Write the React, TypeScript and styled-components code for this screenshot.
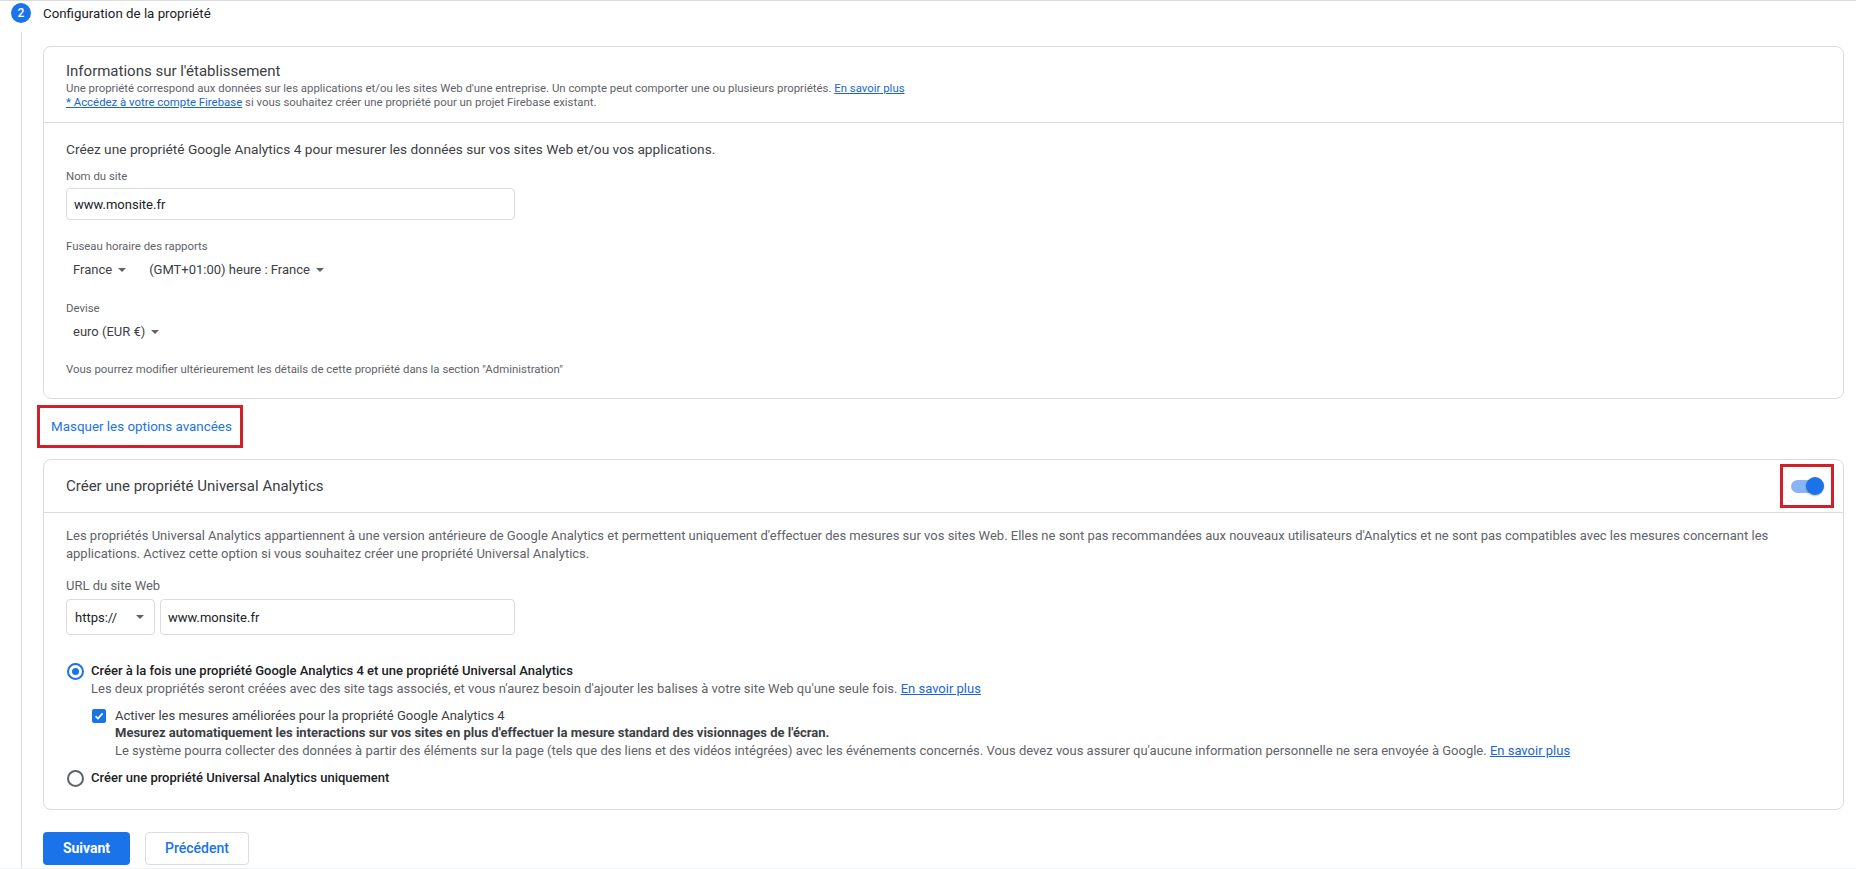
import React from "react";
import styled, { createGlobalStyle } from "styled-components";

const GlobalStyle = createGlobalStyle`
  html, body {
    margin: 0;
    padding: 0;
    background: #f1f3f4;
  }
  body {
    font-family: Roboto, "Liberation Sans", Arial, sans-serif;
    color: #202124;
  }
  * {
    box-sizing: border-box;
  }
`;

const App: React.FC = () => {
    return (
        <Page>
            <GlobalStyle />
            <StepHeader>
                <StepNumber>2</StepNumber>
                <StepTitle>Configuration de la propriété</StepTitle>
            </StepHeader>
            <StepBody>
                <Card>
                    <CardHeader>
                        <HeaderTitle>Informations sur l'établissement</HeaderTitle>
                        <SmallText>
                            Une propriété correspond aux données sur les applications et/ou les sites Web d'une
                            entreprise. Un compte peut comporter une ou plusieurs propriétés.{" "}
                            <Link href="#">En savoir plus</Link>
                        </SmallText>
                        <SmallText>
                            <Link href="#">* Accédez à votre compte Firebase</Link> si vous souhaitez créer une
                            propriété pour un projet Firebase existant.
                        </SmallText>
                    </CardHeader>
                    <CardBody>
                        <Intro>
                            Créez une propriété Google Analytics 4 pour mesurer les données sur vos sites Web et/ou
                            vos applications.
                        </Intro>
                        <FieldLabel $top={11}>Nom du site</FieldLabel>
                        <TextInput $width={449} $top={5}>www.monsite.fr</TextInput>
                        <FieldLabel $top={19}>Fuseau horaire des rapports</FieldLabel>
                        <SelectRow>
                            <InlineSelect>
                                France <Caret />
                            </InlineSelect>
                            <InlineSelect>
                                (GMT+01:00) heure : France <Caret />
                            </InlineSelect>
                        </SelectRow>
                        <FieldLabel $top={22}>Devise</FieldLabel>
                        <SelectRow>
                            <InlineSelect>
                                euro (EUR €) <Caret />
                            </InlineSelect>
                        </SelectRow>
                        <FieldLabel $top={21}>
                            Vous pourrez modifier ultérieurement les détails de cette propriété dans la section
                            "Administration"
                        </FieldLabel>
                    </CardBody>
                </Card>

                <Highlight>
                    <AdvancedLink href="#">Masquer les options avancées</AdvancedLink>
                </Highlight>

                <Card>
                    <ToggleHeader>
                        <HeaderTitle>Créer une propriété Universal Analytics</HeaderTitle>
                        <ToggleHighlight>
                            <SwitchTrack>
                                <SwitchThumb />
                            </SwitchTrack>
                        </ToggleHighlight>
                    </ToggleHeader>
                    <CardBody $top={14}>
                        <Paragraph>
                            Les propriétés Universal Analytics appartiennent à une version antérieure de Google
                            Analytics et permettent uniquement d'effectuer des mesures sur vos sites Web. Elles ne sont
                            pas recommandées aux nouveaux utilisateurs d'Analytics et ne sont pas compatibles avec les
                            mesures concernant les applications. Activez cette option si vous souhaitez créer une
                            propriété Universal Analytics.
                        </Paragraph>
                        <UrlLabel>URL du site Web</UrlLabel>
                        <UrlRow>
                            <ProtocolSelect>
                                https:// <Caret />
                            </ProtocolSelect>
                            <TextInput $width={355} $height={36}>
                                www.monsite.fr
                            </TextInput>
                        </UrlRow>

                        <OptionRow $top={27}>
                            <Radio $checked />
                            <OptionBlock>
                                <OptionLabel>
                                    Créer à la fois une propriété Google Analytics 4 et une propriété Universal
                                    Analytics
                                </OptionLabel>
                                <Paragraph>
                                    Les deux propriétés seront créées avec des site tags associés, et vous n'aurez
                                    besoin d'ajouter les balises à votre site Web qu'une seule fois.{" "}
                                    <Link href="#">En savoir plus</Link>
                                </Paragraph>
                                <CheckRow>
                                    <CheckBox>
                                        <svg width="10" height="10" viewBox="0 0 10 10">
                                            <path
                                                d="M1.5 5.2 L4 7.6 L8.6 2.4"
                                                fill="none"
                                                stroke="#fff"
                                                strokeWidth="1.6"
                                            />
                                        </svg>
                                    </CheckBox>
                                    <OptionBlock>
                                        <Paragraph $dark>
                                            Activer les mesures améliorées pour la propriété Google Analytics 4
                                        </Paragraph>
                                        <BoldLine>
                                            Mesurez automatiquement les interactions sur vos sites en plus d'effectuer
                                            la mesure standard des visionnages de l'écran.
                                        </BoldLine>
                                        <Paragraph>
                                            Le système pourra collecter des données à partir des éléments sur la page
                                            (tels que des liens et des vidéos intégrées) avec les événements concernés.
                                            Vous devez vous assurer qu'aucune information personnelle ne sera envoyée à
                                            Google. <Link href="#">En savoir plus</Link>
                                        </Paragraph>
                                    </OptionBlock>
                                </CheckRow>
                            </OptionBlock>
                        </OptionRow>
                        <OptionRow $top={9}>
                            <Radio />
                            <OptionLabel>Créer une propriété Universal Analytics uniquement</OptionLabel>
                        </OptionRow>
                    </CardBody>
                </Card>

                <Actions>
                    <PrimaryButton>Suivant</PrimaryButton>
                    <SecondaryButton>Précédent</SecondaryButton>
                </Actions>
            </StepBody>
        </Page>
    );
};

const Page = styled.div`
  background: #fff;
  border-top: 1px solid #dadce0;
`;

const StepHeader = styled.div`
  display: flex;
  align-items: center;
  padding: 2px 0 0 11px;
`;

const StepNumber = styled.div`
  width: 20px;
  height: 20px;
  border-radius: 50%;
  background: #1a73e8;
  color: #fff;
  font-size: 12px;
  font-weight: 500;
  display: flex;
  align-items: center;
  justify-content: center;
`;

const StepTitle = styled.div`
  margin-left: 12px;
  font-size: 13.3px;
  color: #202124;
`;

const StepBody = styled.div`
  margin: 9px 0 0 21px;
  border-left: 1px solid #dadce0;
  padding: 14px 12px 3px 21px;
`;

const Card = styled.div`
  border: 1px solid #dadce0;
  border-radius: 8px;
  background: #fff;
`;

const CardHeader = styled.div`
  padding: 14px 22px 13px;
  border-bottom: 1px solid #dadce0;
`;

const ToggleHeader = styled.div`
  display: flex;
  align-items: center;
  justify-content: space-between;
  height: 53px;
  padding: 0 9px 0 22px;
  border-bottom: 1px solid #dadce0;
`;

const HeaderTitle = styled.div`
  font-size: 15px;
  line-height: 20px;
  color: #3c4043;
`;

const SmallText = styled.div`
  font-size: 11.4px;
  line-height: 14px;
  color: #5f6368;
`;

const Link = styled.a`
  color: #1967d2;
  text-decoration: underline;
`;

const CardBody = styled.div<{ $top?: number }>`
  padding: ${(p) => p.$top ?? 17}px 22px 22px;
`;

const Intro = styled.div`
  font-size: 13.7px;
  line-height: 18px;
  color: #3c4043;
`;

const FieldLabel = styled.div<{ $top: number }>`
  margin-top: ${(p) => p.$top}px;
  font-size: 11.4px;
  line-height: 14px;
  color: #5f6368;
`;

const TextInput = styled.div<{ $width: number; $height?: number; $top?: number }>`
  width: ${(p) => p.$width}px;
  height: ${(p) => p.$height ?? 32}px;
  margin-top: ${(p) => p.$top ?? 0}px;
  border: 1px solid #dadce0;
  border-radius: 4px;
  padding: 0 8px 0 7px;
  display: flex;
  align-items: center;
  font-size: 13px;
  color: #202124;
`;

const SelectRow = styled.div`
  display: flex;
  margin-top: 8px;
  padding-left: 7px;
  gap: 23px;
`;

const InlineSelect = styled.div`
  display: flex;
  align-items: center;
  gap: 6px;
  font-size: 13px;
  line-height: 18px;
  color: #3c4043;
`;

const Caret = styled.span`
  display: inline-block;
  width: 0;
  height: 0;
  border-left: 4px solid transparent;
  border-right: 4px solid transparent;
  border-top: 4px solid #5f6368;
`;

const Highlight = styled.div`
  display: flex;
  align-items: center;
  width: 206px;
  height: 43px;
  margin: 6px 0 11px -6px;
  border: 3px solid #d0202a;
  padding-left: 11px;
`;

const AdvancedLink = styled.a`
  font-size: 13.4px;
  white-space: nowrap;
  color: #1a73e8;
  text-decoration: none;
`;

const ToggleHighlight = styled.div`
  width: 54px;
  height: 44px;
  border: 3px solid #d0202a;
  display: flex;
  align-items: center;
  justify-content: center;
`;

const SwitchTrack = styled.div`
  position: relative;
  width: 30px;
  height: 13px;
  margin-right: 2px;
  border-radius: 7px;
  background: #8ab4f8;
`;

const SwitchThumb = styled.div`
  position: absolute;
  right: -3px;
  top: -3px;
  width: 18px;
  height: 18px;
  border-radius: 50%;
  background: #1a73e8;
  box-shadow: 0 1px 2px rgba(0, 0, 0, 0.3);
`;

const Paragraph = styled.div<{ $dark?: boolean }>`
  font-size: 13px;
  line-height: 17.5px;
  color: ${(p) => (p.$dark ? "#3c4043" : "#5f6368")};
`;

const UrlLabel = styled.div`
  margin-top: 15px;
  font-size: 13px;
  line-height: 18px;
  color: #5f6368;
`;

const UrlRow = styled.div`
  display: flex;
  gap: 5px;
  margin-top: 4px;
`;

const ProtocolSelect = styled.div`
  width: 89px;
  height: 36px;
  border: 1px solid #dadce0;
  border-radius: 4px;
  padding: 0 10px 0 8px;
  display: flex;
  align-items: center;
  justify-content: space-between;
  font-size: 13px;
  color: #202124;
`;

const OptionRow = styled.div<{ $top: number }>`
  display: flex;
  align-items: flex-start;
  gap: 7px;
  margin-top: ${(p) => p.$top}px;
`;

const OptionBlock = styled.div`
  display: flex;
  flex-direction: column;
`;

const Radio = styled.div<{ $checked?: boolean }>`
  flex: none;
  width: 17px;
  height: 17px;
  margin: 1px 0 0 1px;
  border-radius: 50%;
  border: 2px solid ${(p) => (p.$checked ? "#1a73e8" : "#5f6368")};
  display: flex;
  align-items: center;
  justify-content: center;

  &::after {
    content: "";
    display: ${(p) => (p.$checked ? "block" : "none")};
    width: 7px;
    height: 7px;
    border-radius: 50%;
    background: #1a73e8;
  }
`;

const OptionLabel = styled.div`
  font-size: 13px;
  line-height: 18px;
  font-weight: 500;
  color: #202124;
`;

const CheckRow = styled.div`
  display: flex;
  align-items: flex-start;
  gap: 9px;
  margin-top: 9px;
  padding-left: 1px;
`;

const CheckBox = styled.div`
  flex: none;
  width: 14px;
  height: 14px;
  margin-top: 2px;
  border-radius: 2px;
  background: #1a73e8;
  display: flex;
  align-items: center;
  justify-content: center;
`;

const BoldLine = styled.div`
  font-size: 13px;
  line-height: 18px;
  font-weight: 700;
  color: #3c4043;
`;

const Actions = styled.div`
  display: flex;
  gap: 15px;
  margin-top: 22px;
`;

const PrimaryButton = styled.button`
  width: 87px;
  height: 33px;
  border: none;
  border-radius: 4px;
  background: #1a73e8;
  color: #fff;
  font-family: inherit;
  font-size: 14px;
  font-weight: 700;
`;

const SecondaryButton = styled.button`
  width: 104px;
  height: 33px;
  border: 1px solid #dadce0;
  border-radius: 4px;
  background: #fff;
  color: #1a73e8;
  font-family: inherit;
  font-size: 14px;
  font-weight: 500;
`;

export default App;
